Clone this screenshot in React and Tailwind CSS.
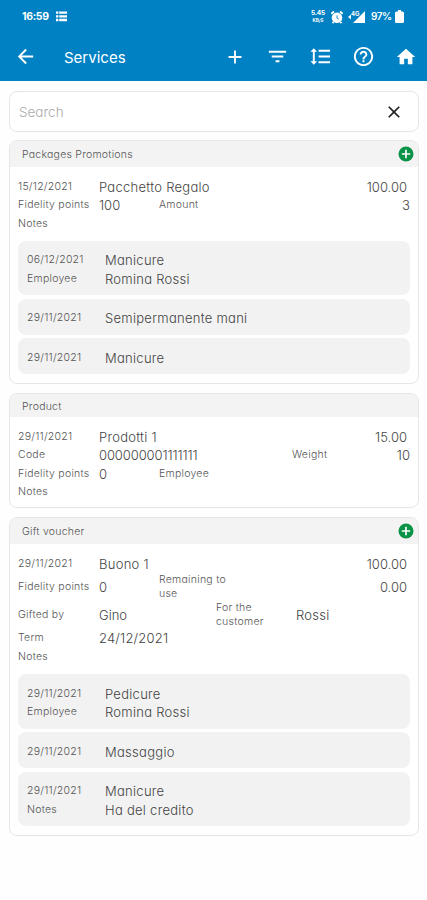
import {
  MdAdd,
  MdArrowBack,
  MdClose,
  MdFilterList,
  MdFormatLineSpacing,
  MdHelpOutline,
  MdHome,
} from 'react-icons/md';

const Label = ({ children, className = 'w-[81px]' }) => (
  <span className={`shrink-0 text-[10.5px] leading-[13.5px] tracking-[0.25px] text-[#555555] ${className}`}>
    {children}
  </span>
);

const Value = ({ children, className = 'tracking-[0.28px]' }) => (
  <span className={`whitespace-nowrap text-[13px] leading-[18px] text-[#444444] ${className}`}>
    {children}
  </span>
);

const Row = ({ children, className = 'h-[18.5px]' }) => (
  <div className={`flex items-center ${className}`}>{children}</div>
);

const AddBadge = () => (
  <svg viewBox="0 0 16 16" className="-mt-px size-[16px]" fill="none">
    <circle cx="8" cy="8" r="7.5" fill="#099347" />
    <path d="M8 3.8v8.4M3.8 8h8.4" stroke="#ffffff" strokeWidth="1.7" />
  </svg>
);

const Card = ({ title, canAdd, className, headerClass = 'h-[26px]', children }) => (
  <section className={`shrink-0 overflow-hidden rounded-lg border border-[#e6e6e6] bg-white ${className}`}>
    <header className={`flex items-center justify-between bg-[#f3f3f3] pl-3 pr-1 ${headerClass}`}>
      <h2 className="pt-[2px] text-[10.5px] tracking-[0.24px] text-[#555555]">{title}</h2>
      {canAdd && <AddBadge />}
    </header>
    <div className="px-2">{children}</div>
  </section>
);

const Entry = ({ date, name, label, detail }) => (
  <div className="rounded-lg bg-[#f2f2f2] px-[9px] pb-[7.5px] pt-[10px]">
    <Row>
      <Label className="w-[78px]">{date}</Label>
      <Value>{name}</Value>
    </Row>
    {label && (
      <Row>
        <Label className="w-[78px]">{label}</Label>
        <Value>{detail}</Value>
      </Row>
    )}
  </div>
);

const SignalIcon = () => (
  <svg viewBox="0 0 20 14" className="h-[14px] w-[20px]" fill="currentColor">
    <path d="M18 1v12H6z" />
    <path d="M4 4.5 1 7l3 2.5z" />
    <text x="4" y="6" fontSize="6" fontWeight="700">4G</text>
  </svg>
);

const AlarmIcon = () => (
  <svg viewBox="0 0 14 14" className="size-[14px]">
    <circle cx="7" cy="7.8" r="5.3" fill="currentColor" />
    <path d="M1.3 3.8 4 1.5M10 1.5l2.7 2.3M3.5 12l-1 1.2M10.5 12l1 1.2" stroke="currentColor" strokeWidth="1.8" />
    <path d="M7 5.3v2.8l1.7 1" fill="none" stroke="#0081c4" strokeWidth="0.9" />
  </svg>
);

const StatusBar = () => (
  <div className="flex h-[33px] items-center pl-[22px] pr-[23px] text-white">
    <span className="w-[34px] text-[10.5px] font-bold tracking-[-0.35px]">16:59</span>
    <svg viewBox="0 0 12 11" className="h-[11px] w-[11px]" fill="currentColor">
      <path d="M0 0h2.6v2.6H0zM3.5 0H12v2.6H3.5zM0 4h2.6v2.6H0zM3.5 4H12v2.6H3.5zM0 8h2.6v2.6H0zM3.5 8H12v2.6H3.5z" />
    </svg>
    <div className="ml-auto flex items-center">
      <div className="mr-[5px] flex w-[14px] flex-col items-center gap-px font-bold">
        <div className="text-[6.5px] leading-[8px] tracking-[-0.2px]">5.45</div>
        <div className="text-[4.5px] leading-[6px]">KB/S</div>
      </div>
      <AlarmIcon />
      <span className="ml-[3px]"><SignalIcon /></span>
      <span className="ml-[4px] w-[24px] whitespace-nowrap text-[10px] font-semibold tracking-[-0.5px]">97%</span>
      <svg viewBox="0 0 9 13" className="h-[13px] w-[9px]" fill="currentColor">
        <path d="M3 0h3v1.5h1.5Q9 1.5 9 3v8.5Q9 13 7.5 13h-6Q0 13 0 11.5V3q0-1.5 1.5-1.5H3z" />
      </svg>
    </div>
  </div>
);

const Toolbar = () => (
  <div className="flex h-[47px] items-center pl-[14px] pr-[10px] text-white">
    <MdArrowBack className="size-[23px]" />
    <h1 className="ml-[27px] mt-[3px] text-[15px] font-normal">Services</h1>
    <div className="ml-auto flex items-center gap-[20px]">
      <MdAdd className="size-[22px]" />
      <MdFilterList className="size-[23px]" />
      <MdFormatLineSpacing className="size-[23px]" />
      <MdHelpOutline className="size-[23px]" />
      <MdHome className="size-[22px]" />
    </div>
  </div>
);

const App = () => (
  <div className="flex h-[900px] w-[427px] flex-col bg-[#fefefe] font-['Inter',sans-serif] font-light [font-feature-settings:'cv11']">
    <div className="h-[80.5px] shrink-0 bg-[#0081c4]">
      <StatusBar />
      <Toolbar />
    </div>

    <main className="flex flex-col pl-[9px] pr-[8px] pt-[10.5px]">
      <div className="flex h-[41px] items-center justify-between rounded-lg border border-[#e6e6e6] bg-white pl-[9px] pr-[14px]">
        <span className="pt-px text-[13.5px] text-[#aaaaaa]">Search</span>
        <MdClose className="size-[20px] text-[#222222]" />
      </div>

      <Card title="Packages Promotions" canAdd className="mt-2 h-[244px]">
        <div className="pt-[10.3px]">
          <Row>
            <Label>15/12/2021</Label>
            <Value>Pacchetto Regalo</Value>
            <Value className="ml-auto mr-[3px]">100.00</Value>
          </Row>
          <Row>
            <Label>Fidelity points</Label>
            <Value className="w-[60px]">100</Value>
            <Label>Amount</Label>
            <Value className="ml-auto">3</Value>
          </Row>
          <Row><Label>Notes</Label></Row>
        </div>
        <div className="mt-[8.2px] flex flex-col gap-[3.5px]">
          <Entry date="06/12/2021" name="Manicure" label="Employee" detail="Romina Rossi" />
          <Entry date="29/11/2021" name="Semipermanente mani" />
          <Entry date="29/11/2021" name="Manicure" />
        </div>
      </Card>

      <Card title="Product" className="mt-[9px] h-[115px]" headerClass="h-[23px]">
        <div className="pt-[10.3px]">
          <Row>
            <Label>29/11/2021</Label>
            <Value>Prodotti 1</Value>
            <Value className="ml-auto mr-[3px]">15.00</Value>
          </Row>
          <Row>
            <Label>Code</Label>
            <Value className="w-[193px] tracking-[-0.1px]">000000001111111</Value>
            <Label>Weight</Label>
            <Value className="ml-auto">10</Value>
          </Row>
          <Row>
            <Label>Fidelity points</Label>
            <Value className="w-[60px]">0</Value>
            <Label>Employee</Label>
          </Row>
          <Row><Label>Notes</Label></Row>
        </div>
      </Card>

      <Card title="Gift voucher" canAdd className="mt-[9px] h-[319px]">
        <div className="pt-[10.3px]">
          <Row>
            <Label>29/11/2021</Label>
            <Value>Buono 1</Value>
            <Value className="ml-auto mr-[3px]">100.00</Value>
          </Row>
          <Row className="h-[28px]">
            <Label>Fidelity points</Label>
            <Value className="w-[60px]">0</Value>
            <Label>Remaining to use</Label>
            <Value className="ml-auto mr-[3px]">0.00</Value>
          </Row>
          <Row className="h-[28px]">
            <Label>Gifted by</Label>
            <Value className="w-[117px]">Gino</Value>
            <Label className="w-[80px] pr-[20px]">For the customer</Label>
            <Value>Rossi</Value>
          </Row>
          <Row>
            <Label>Term</Label>
            <Value className="tracking-[0.2px]">24/12/2021</Value>
          </Row>
          <Row><Label>Notes</Label></Row>
        </div>
        <div className="mt-[8.5px] flex flex-col gap-[3.5px]">
          <Entry date="29/11/2021" name="Pedicure" label="Employee" detail="Romina Rossi" />
          <Entry date="29/11/2021" name="Massaggio" />
          <Entry date="29/11/2021" name="Manicure" label="Notes" detail="Ha del credito" />
        </div>
      </Card>
    </main>
  </div>
);

export default App;
